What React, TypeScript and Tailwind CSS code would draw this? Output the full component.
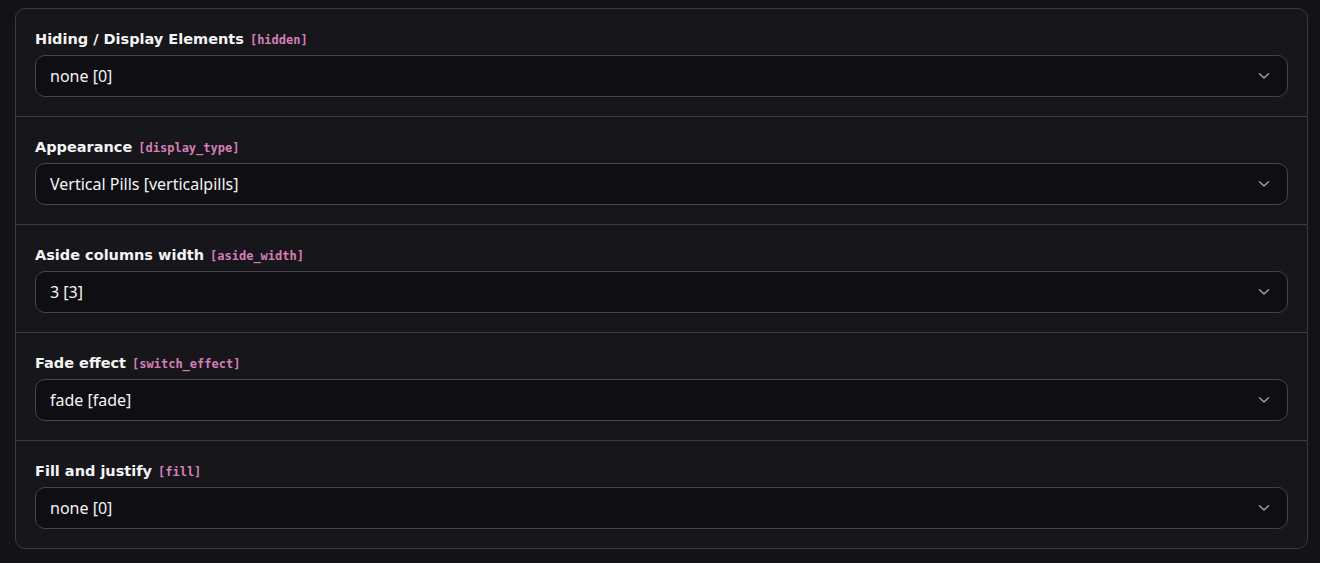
import React from "react";

const rows = [
  { label: "Hiding / Display Elements", code: "[hidden]", value: "none [0]" },
  { label: "Appearance", code: "[display_type]", value: "Vertical Pills [verticalpills]" },
  { label: "Aside columns width", code: "[aside_width]", value: "3 [3]" },
  { label: "Fade effect", code: "[switch_effect]", value: "fade [fade]" },
  { label: "Fill and justify", code: "[fill]", value: "none [0]" },
];

export default function App() {
  return (
    <div className="w-[1320px] h-[563px] bg-[#131217] pt-2 px-[15px] overflow-hidden" style={{ fontFamily: '"DejaVu Sans", Verdana, sans-serif' }}>
      <div className="w-[1293px] rounded-[10px] border border-[#3a3a41] bg-[#17161b] flex flex-col">
        {rows.map((r, i) => (
          <div key={i} className={"px-[19px] pt-[20px] pb-[19px] flex flex-col gap-[6px] " + (i > 0 ? "border-t border-[#3a3a41]" : "")}>
            <div className="flex items-baseline gap-[6px] h-[20px]">
              <span className="text-[14.5px] font-bold text-[#f4f4f5]">{r.label}</span>
              <span className="text-[12px] font-bold text-[#d67fb6]" style={{ fontFamily: '"DejaVu Sans Mono", monospace' }}>{r.code}</span>
            </div>
            <div className="h-[42px] rounded-[10px] border border-[#44444c] bg-[#0f0e12] flex items-center justify-between pl-[14px] pr-[17px]">
              <span className="text-[16px] text-[#f4f4f5]" style={{ fontFamily: '"Noto Sans", sans-serif' }}>{r.value}</span>
              <svg width="12" height="8" viewBox="0 0 12 8" fill="none">
                <path d="M1.5 1.8 L6 6 L10.5 1.8" stroke="#a1a1aa" strokeWidth="1.4" strokeLinecap="round" strokeLinejoin="round" />
              </svg>
            </div>
          </div>
        ))}
      </div>
    </div>
  );
}
